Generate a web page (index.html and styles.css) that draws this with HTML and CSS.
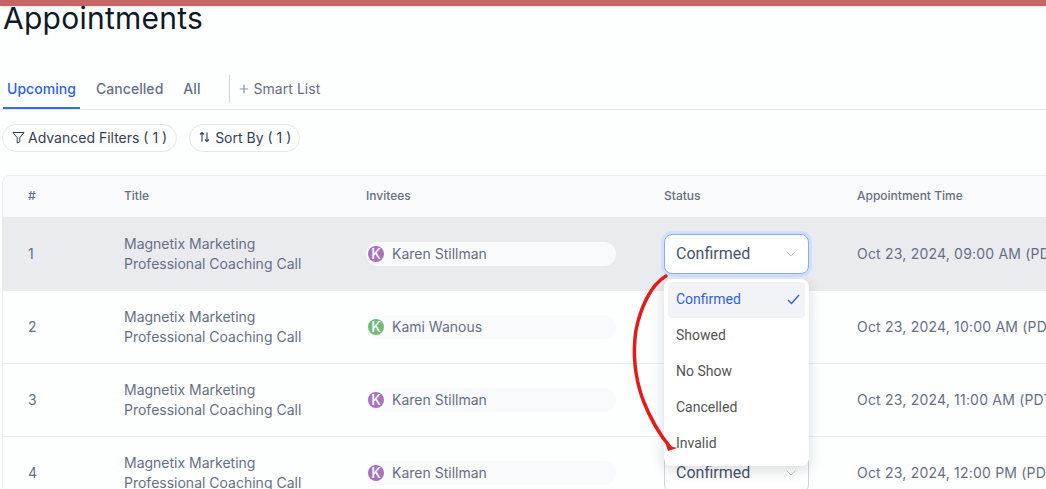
FILE: index.html
```html
<!DOCTYPE html>
<html lang="en">
<head>
    <meta charset="UTF-8">
    <meta name="viewport" content="width=device-width, initial-scale=1.0">
    <title>Appointments</title>
    <link rel="stylesheet" href="styles.css">
</head>
<body>
    <div class="top-bar"></div>
    <h1 class="page-title">Appointments</h1>

    <div class="tabs">
        <a class="tab active">Upcoming</a>
        <a class="tab">Cancelled</a>
        <a class="tab">All</a>
        <div class="tab-divider"></div>
        <a class="smart-list">
            <svg width="10" height="10" viewBox="0 0 10 10"><path d="M5 .8v8.4M.8 5h8.4" stroke="#8a93a3" stroke-width="1.2" fill="none"/></svg>
            Smart List
        </a>
    </div>

    <div class="filters">
        <button class="pill">
            <svg width="13" height="13" viewBox="0 0 13 13"><path d="M1 1.5h11L7.8 6.7v4.1L5.2 12V6.7z" stroke="#344054" stroke-width="1" stroke-linejoin="round" fill="none"/></svg>
            Advanced Filters ( 1 )
        </button>
        <button class="pill pill-sort">
            <svg width="11" height="12" viewBox="0 0 11 12"><path d="M3 10.500V1.500M1 3.500l2-2 2 2M8 1.500v9M6 8.500l2 2 2-2" stroke="#344054" stroke-width="1.1" fill="none"/></svg>
            Sort By ( 1 )
        </button>
    </div>

    <div class="table-wrap">
        <table class="appointments">
            <colgroup>
                <col class="col-num"><col class="col-title"><col class="col-invitee"><col class="col-status"><col class="col-time">
            </colgroup>
            <thead>
                <tr>
                    <th>#</th><th>Title</th><th>Invitees</th><th>Status</th><th>Appointment Time</th>
                </tr>
            </thead>
            <tbody>
                <tr class="selected">
                    <td>1</td>
                    <td>Magnetix Marketing<br>Professional Coaching Call</td>
                    <td><div class="invitee"><span class="avatar purple">K</span>Karen Stillman</div></td>
                    <td><div class="select focused">Confirmed<svg class="chevron" width="10" height="6" viewBox="0 0 10 6"><path d="M.5.5L5 5 9.500.5" stroke="#c4c8d0" stroke-width="1" fill="none"/></svg></div></td>
                    <td class="time">Oct 23, 2024, 09:00 AM (PDT)</td>
                </tr>
                <tr>
                    <td>2</td>
                    <td>Magnetix Marketing<br>Professional Coaching Call</td>
                    <td><div class="invitee"><span class="avatar green">K</span>Kami Wanous</div></td>
                    <td><div class="select">Confirmed<svg class="chevron" width="10" height="6" viewBox="0 0 10 6"><path d="M.5.5L5 5 9.500.5" stroke="#c4c8d0" stroke-width="1" fill="none"/></svg></div></td>
                    <td class="time">Oct 23, 2024, 10:00 AM (PDT)</td>
                </tr>
                <tr>
                    <td>3</td>
                    <td>Magnetix Marketing<br>Professional Coaching Call</td>
                    <td><div class="invitee"><span class="avatar purple">K</span>Karen Stillman</div></td>
                    <td><div class="select">Confirmed<svg class="chevron" width="10" height="6" viewBox="0 0 10 6"><path d="M.5.5L5 5 9.500.5" stroke="#c4c8d0" stroke-width="1" fill="none"/></svg></div></td>
                    <td class="time">Oct 23, 2024, 11:00 AM (PDT)</td>
                </tr>
                <tr>
                    <td>4</td>
                    <td>Magnetix Marketing<br>Professional Coaching Call</td>
                    <td><div class="invitee"><span class="avatar purple">K</span>Karen Stillman</div></td>
                    <td><div class="select">Confirmed<svg class="chevron" width="10" height="6" viewBox="0 0 10 6"><path d="M.5.5L5 5 9.500.5" stroke="#c4c8d0" stroke-width="1" fill="none"/></svg></div></td>
                    <td class="time">Oct 23, 2024, 12:00 PM (PDT)</td>
                </tr>
            </tbody>
        </table>
    </div>

    <!-- Open status menu, sits over the table -->
    <ul class="status-menu">
        <li class="current">Confirmed<svg width="13" height="11" viewBox="0 0 13 11"><path d="M1 6l3.500 3.500L12 1" stroke="#2f5fe8" stroke-width="1.400" fill="none"/></svg></li>
        <li>Showed</li>
        <li>No Show</li>
        <li>Cancelled</li>
        <li>Invalid</li>
    </ul>

    <!-- Red marker annotation drawn on the screenshot -->
    <svg class="marker" width="1046" height="489" viewBox="0 0 1046 489">
        <path d="M666 276C650 285 640 310 636 330C633 350 634 375 643 400C650 418 660 435 670 447" stroke="#e31b1b" stroke-width="3.500" stroke-linecap="round" fill="none"/>
        <path d="M666 445L677 448L668 451Z" fill="#e31b1b"/>
    </svg>
</body>
</html>
```

FILE: styles.css
```css
body {
    margin: 0;
    height: 489px;
    overflow: hidden;
    background-color: #fdfefe;
    font-family: 'Inter', sans-serif;
    color: #667085;
}

.top-bar {
    height: 6px;
    background-color: #c46666;
    box-shadow: 0 1px 3px rgba(0, 0, 0, 0.12);
}

.page-title {
    margin: 0 0 0 3px;
    height: 24px;
    line-height: 24px;
    font-size: 30px;
    font-weight: 400;
    letter-spacing: 0.25px;
    color: #101828;
}

/* Tabs */
.tabs {
    display: flex;
    align-items: flex-start;
    height: 34px;
    margin-top: 45px;
    border-bottom: 1px solid #e4e7ec;
    font-size: 14px;
    font-weight: 500;
    letter-spacing: 0.05px;
}

.tab {
    display: flex;
    align-items: center;
    height: 27px;
    padding: 0 4px 5px;
    margin-left: 3px;
    margin-right: 9px;
}

.tab.active {
    color: #2f5fe8;
    border-bottom: 2px solid #2f6bff;
}

.tab-divider {
    width: 1px;
    height: 28px;
    margin-left: 16px;
    background-color: #d0d5dd;
}

.smart-list {
    display: flex;
    align-items: center;
    gap: 4px;
    height: 27px;
    margin-left: 9px;
    font-weight: 400;
}

/* Filter pills */
.filters {
    display: flex;
    gap: 12px;
    margin: 14px 0 0 2px;
}

.pill {
    display: flex;
    align-items: center;
    gap: 3px;
    height: 28px;
    padding: 0 9px 2px;
    background-color: #fff;
    border: 1px solid #e4e7ec;
    border-radius: 14px;
    font-family: inherit;
    font-size: 14px;
    color: #344054;
}

.pill-sort {
    gap: 5px;
    padding-right: 8px;
}

/* Table */
.table-wrap {
    width: 1120px;
    margin: 23px 0 0 2px;
    border: 1px solid #eaecf0;
    border-right: 0;
    border-bottom: 0;
    border-radius: 8px 0 0 0;
    overflow: hidden;
}

.appointments {
    width: 1119px;
    table-layout: fixed;
    border-collapse: separate;
    border-spacing: 0;
    font-size: 14px;
}

.col-num { width: 121px; }
.col-title { width: 242px; }
.col-invitee { width: 298px; }
.col-status { width: 193px; }
.col-time { width: 265px; }

.appointments th {
    height: 39px;
    padding: 0 0 2px;
    background-color: #f9fafb;
    text-align: left;
    font-size: 12px;
    font-weight: 500;
    color: #667085;
}

.appointments td {
    height: 72px;
    padding: 0;
    border-bottom: 1px solid #eaecf0;
    line-height: 20px;
    white-space: nowrap;
}

.appointments th:first-child,
.appointments td:first-child {
    padding-left: 25px;
}

.appointments .selected td {
    height: 73px;
    background-color: #eaebef;
    border-bottom-color: #eaebef;
}

.appointments .time {
    letter-spacing: 0.2px;
}

.invitee {
    display: flex;
    align-items: center;
    gap: 8px;
    width: 248px;
    height: 24px;
    padding-left: 2px;
    background-color: #f9fafb;
    border-radius: 12px;
}

.avatar {
    display: flex;
    align-items: center;
    justify-content: center;
    width: 16px;
    height: 16px;
    border-radius: 50%;
    font-size: 14px;
    font-weight: 500;
    color: #fff;
}

.purple { background-color: #a673bd; }
.green { background-color: #72bb7e; }

.select {
    display: flex;
    align-items: center;
    justify-content: space-between;
    box-sizing: border-box;
    width: 145px;
    height: 40px;
    padding: 0 12px 0 11px;
    background-color: #fff;
    border: 1px solid #d0d5dd;
    border-radius: 8px;
    font-family: 'Roboto', sans-serif;
    font-size: 16px;
    color: #475467;
}

.select.focused {
    border-color: #84adff;
    box-shadow: 0 0 0 3px #d1e0ff;
}

/* Dropdown */
.status-menu {
    position: absolute;
    top: 279px;
    left: 664px;
    box-sizing: border-box;
    width: 145px;
    height: 187px;
    margin: 0;
    padding: 3px 4px;
    list-style: none;
    background-color: #fff;
    border-radius: 8px;
    box-shadow: 0 4px 14px rgba(16, 24, 40, 0.16);
    font-family: 'Roboto', sans-serif;
    font-size: 14px;
    color: #555;
}

.status-menu li {
    display: flex;
    align-items: center;
    justify-content: space-between;
    box-sizing: border-box;
    height: 36px;
    padding: 0 5px 2px 8px;
    border-radius: 4px;
}

.status-menu .current {
    background-color: #f2f3f6;
    color: #2f5fe8;
}

.marker {
    position: absolute;
    top: 0;
    left: 0;
    pointer-events: none;
}
```
